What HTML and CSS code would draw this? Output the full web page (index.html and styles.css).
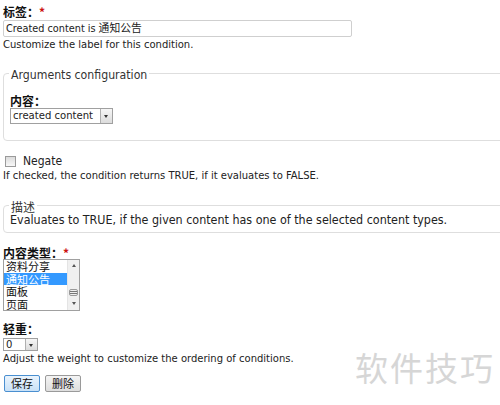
FILE: index.html
```html
<!DOCTYPE html>
<html>
<head>
<meta charset="utf-8">
<link rel="stylesheet" href="styles.css">
</head>
<body>
<div class="page">
  <div class="item item-label">
    <div class="lbl">标签：<span class="req">*</span></div>
    <div class="textbox">Created content is 通知公告</div>
    <div class="desc">Customize the label for this condition.</div>
  </div>

  <fieldset class="fs fs-args">
    <legend>Arguments configuration</legend>
    <div class="lbl">内容：</div>
    <div class="select sel-content"><span class="sel-text">created content</span><span class="arrow"></span></div>
  </fieldset>

  <div class="item item-negate">
    <div class="check-row"><span class="checkbox"></span><span class="check-text">Negate</span></div>
    <div class="desc">If checked, the condition returns TRUE, if it evaluates to FALSE.</div>
  </div>

  <fieldset class="fs fs-desc">
    <legend>描述</legend>
    <div class="fs-text">Evaluates to TRUE, if the given content has one of the selected content types.</div>
  </fieldset>

  <div class="item item-types">
    <div class="lbl lbl-tight">内容类型：<span class="req">*</span></div>
    <div class="listbox">
      <div class="options">
        <div class="opt">资料分享</div>
        <div class="opt sel">通知公告</div>
        <div class="opt">面板</div>
        <div class="opt">页面</div>
      </div>
      <div class="vscroll">
        <span class="up"></span>
        <span class="grip"></span>
        <span class="down"></span>
      </div>
    </div>
  </div>

  <div class="item item-weight">
    <div class="lbl lbl-tight">轻重：</div>
    <div class="select sel-weight"><span class="sel-text">0</span><span class="arrow"></span></div>
    <div class="desc">Adjust the weight to customize the ordering of conditions.</div>
  </div>

  <div class="actions">
    <span class="btn btn-primary">保存</span>
    <span class="btn">删除</span>
  </div>

  <div class="watermark">软件技巧</div>
</div>
</body>
</html>
```

FILE: styles.css
```css
html, body {
  margin: 0;
  padding: 0;
  background: #ffffff;
}
body {
  font-family: "DejaVu Sans", "Noto Sans CJK SC", sans-serif;
  color: #222;
  font-size: 10px;
  width: 500px;
  height: 405px;
  overflow: hidden;
}
.page {
  position: relative;
  padding: 5px 0 0 3px;
}
.lbl {
  font-family: "Noto Sans CJK SC", sans-serif;
  font-weight: bold;
  font-size: 12px;
  line-height: 14px;
  color: #111;
}
.lbl-tight {
  line-height: 13px;
}
.req {
  color: #cc1111;
}
.textbox {
  margin-top: 1px;
  width: 343px;
  height: 15px;
  border: 1px solid #cfcfcf;
  border-radius: 2px;
  padding: 0 2px;
  font-size: 10.8px;
  line-height: 15px;
  color: #222;
  font-family: "DejaVu Sans Condensed", "Noto Sans CJK SC", sans-serif;
}
.desc {
  font-size: 10px;
  line-height: 13px;
  margin-top: 1px;
  color: #222;
}
.fs {
  margin: 0;
  border: 1px solid #dedede;
  border-radius: 4px;
  width: 520px;
  box-sizing: border-box;
}
.fs legend {
  font-family: "DejaVu Sans Condensed", "Noto Sans CJK SC", sans-serif;
  font-size: 12.2px;
  line-height: 12px;
  color: #333;
  padding: 4px 2px 0 2px;
  margin-left: -1px;
}
.fs-args {
  margin-top: 14px;
  padding: 13px 6px 16px 6px;
}
.select {
  display: flex;
  align-items: stretch;
  border: 1px solid #a0a0a0;
  height: 14px;
  box-sizing: content-box;
  background: #fff;
}
.sel-text {
  font-size: 11.2px;
  line-height: 14px;
  padding: 0 2px;
  font-family: "DejaVu Sans Condensed", sans-serif;
  flex: 1;
}
.sel-content {
  width: 101px;
}
.arrow {
  width: 11px;
  border-left: 1px solid #b0b0b0;
  background: linear-gradient(#f6f6f6, #dcdcdc);
  position: relative;
}
.arrow::after {
  content: "";
  position: absolute;
  left: 3px;
  top: 50%;
  margin-top: -1px;
  border-left: 2.5px solid transparent;
  border-right: 2.5px solid transparent;
  border-top: 3px solid #333;
}
.item-negate {
  margin-top: 14px;
}
.check-row {
  display: flex;
  align-items: center;
  height: 12px;
}
.checkbox {
  width: 9px;
  height: 9px;
  border: 1px solid #9a9a9a;
  background: linear-gradient(#dcdcdc, #f8f8f8);
  margin: 0 7px 0 2px;
}
.check-text {
  font-family: "DejaVu Sans Condensed", sans-serif;
  font-size: 12px;
  line-height: 12px;
  color: #222;
}
.item-negate .desc {
  margin-top: 2px;
}
.fs-desc {
  margin-top: 15px;
  padding: 0 6px 5px 6px;
}
.fs-desc legend {
  font-family: "Noto Sans CJK SC", sans-serif;
  font-size: 12px;
}
.fs-text {
  font-family: "DejaVu Sans Condensed", sans-serif;
  font-size: 12.4px;
  line-height: 14px;
  color: #222;
}
.item-types {
  margin-top: 13px;
}
.listbox {
  display: flex;
  width: 75px;
  height: 50px;
  border: 1px solid #a0a0a0;
}
.options {
  flex: 1;
  font-family: "Noto Sans CJK SC", sans-serif;
  font-size: 11px;
}
.opt {
  height: 12.5px;
  line-height: 12.5px;
  padding-left: 2px;
  color: #111;
}
.opt.sel {
  background: #3399ff;
  color: #fff;
}
.vscroll {
  width: 12px;
  background: #f0f0f0;
  border-left: 1px solid #e4e4e4;
  display: flex;
  flex-direction: column;
  justify-content: space-between;
  align-items: center;
  padding: 4px 0 5px 0;
  box-sizing: border-box;
}
.up {
  width: 0; height: 0;
  border-left: 2.5px solid transparent;
  border-right: 2.5px solid transparent;
  border-bottom: 3px solid #555;
}
.down {
  width: 0; height: 0;
  border-left: 2.5px solid transparent;
  border-right: 2.5px solid transparent;
  border-top: 3px solid #555;
}
.grip {
  width: 7px;
  height: 5px;
  border: 1px solid #999;
  border-radius: 2px;
  background: repeating-linear-gradient(#eee 0 1px, #777 1px 2px);
  margin-top: 16px;
}
.item-weight {
  margin-top: 11px;
}
.sel-weight {
  width: 33px;
  height: 11px;
  margin-top: 3px;
}
.sel-weight .sel-text {
  line-height: 11px;
}
.item-weight .desc {
  margin-top: 1px;
}
.actions {
  display: flex;
  gap: 5px;
  margin-top: 10px;
  margin-left: 1px;
}
.btn {
  font-family: "Noto Sans CJK SC", sans-serif;
  font-size: 11px;
  line-height: 15px;
  height: 15px;
  padding: 0 6px;
  border: 1px solid #9a9a9a;
  border-radius: 2px;
  background: linear-gradient(#f4f4f4, #dedede);
  color: #111;
}
.btn-primary {
  border-color: #4a8fd0;
  background: linear-gradient(#eaf4fd, #c8e1f7);
}
.watermark {
  position: absolute;
  right: 5px;
  top: 347px;
  font-family: "Noto Sans CJK SC", sans-serif;
  font-size: 33px;
  letter-spacing: 2px;
  color: #d6d6d6;
  line-height: 40px;
}
```
